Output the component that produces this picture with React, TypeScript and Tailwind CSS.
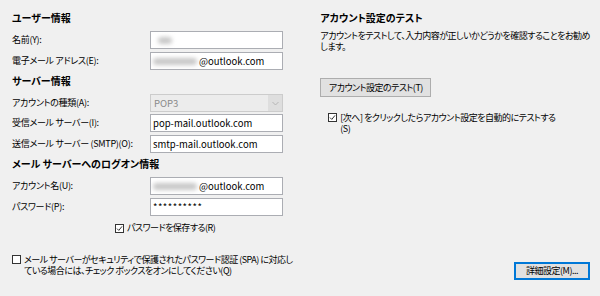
const font = "font-['Noto_Sans_CJK_JP',sans-serif] [font-feature-settings:'palt']";

function Field({ label, children }: { label: string; children?: React.ReactNode }) {
  return (
    <div className="flex items-center h-[18px]">
      <div className="w-[138px] shrink-0 whitespace-nowrap tracking-[-0.3px]">{label}</div>
      <div className="w-[133px] h-[18px] bg-white border border-[#abadb3] flex items-center px-[2px] whitespace-nowrap overflow-hidden text-[9.5px] tracking-normal">
        {children}
      </div>
    </div>
  );
}

function Blur({ w }: { w: number }) {
  return <span className="inline-block h-[7px] rounded-full bg-[#c8c8c8] blur-[2px]" style={{ width: w }} />;
}

function Check({ checked }: { checked?: boolean }) {
  return (
    <span className="inline-flex items-center justify-center w-[9px] h-[9px] border border-[#333] bg-white shrink-0">
      {checked && (
        <svg width="7" height="7" viewBox="0 0 7 7" fill="none">
          <path d="M1 3.6 L2.8 5.4 L6 1.4" stroke="#333" strokeWidth="1" />
        </svg>
      )}
    </span>
  );
}

export default function App() {
  return (
    <div className={`w-[600px] h-[296px] bg-[#f0f0f0] flex text-[9px] leading-[10px] tracking-[-0.5px] text-black whitespace-nowrap ${font}`}>
      <div className="w-[300px] pl-[12px] pt-[13px] flex flex-col">
        <div className="font-bold h-[12px] text-[10px] tracking-normal">ユーザー情報</div>
        <div className="mt-[6px]">
          <Field label="名前(Y):">
            <span className="ml-[5px]"><Blur w={14} /></span>
          </Field>
        </div>
        <div className="mt-[3px]">
          <Field label="電子メール アドレス(E):">
            <Blur w={44} />
            <span className="ml-[2px]">@outlook.com</span>
          </Field>
        </div>
        <div className="font-bold h-[12px] mt-[6px] text-[10px] tracking-normal">サーバー情報</div>
        <div className="mt-[6px] flex items-center h-[18px]">
          <div className="w-[138px] shrink-0 tracking-[-0.3px]">アカウントの種類(A):</div>
          <div className="w-[133px] h-[18px] bg-[#ececec] border border-[#cccccc] flex items-center text-[#8a8a8a] text-[9.5px] tracking-normal">
            <span className="flex-1 pl-[3px]">POP3</span>
            <span className="w-[14px] h-full bg-[#dedede] flex items-center justify-center">
              <svg width="7" height="5" viewBox="0 0 7 5" fill="none">
                <path d="M0.5 1 L3.5 4 L6.5 1" stroke="#b5b5b5" strokeWidth="1" />
              </svg>
            </span>
          </div>
        </div>
        <div className="mt-[2px]">
          <Field label="受信メール サーバー(I):">pop-mail.outlook.com</Field>
        </div>
        <div className="mt-[3px]">
          <Field label="送信メール サーバー (SMTP)(O):">smtp-mail.outlook.com</Field>
        </div>
        <div className="font-bold h-[12px] mt-[6px] text-[10px] tracking-normal">メール サーバーへのログオン情報</div>
        <div className="mt-[6px]">
          <Field label="アカウント名(U):">
            <Blur w={44} />
            <span className="ml-[2px]">@outlook.com</span>
          </Field>
        </div>
        <div className="mt-[3px]">
          <Field label="パスワード(P):">
            <span className="tracking-[0.5px]">**********</span>
          </Field>
        </div>
        <div className="mt-[6px] flex items-center gap-[3px] pl-[103px] h-[12px]">
          <Check checked />
          <span>パスワードを保存する(R)</span>
        </div>
        <div className="mt-[20px] flex gap-[3px]">
          <span className="mt-[1px]"><Check /></span>
          <div className="flex flex-col leading-[11px]">
            <span>メール サーバーがセキュリティで保護されたパスワード認証 (SPA) に対応し</span>
            <span>ている場合には、チェック ボックスをオンにしてください(Q)</span>
          </div>
        </div>
      </div>
      <div className="flex-1 pl-[27px] pt-[13px] pr-[10px] pb-[16px] flex flex-col">
        <div className="font-bold h-[12px] text-[10px] tracking-normal">アカウント設定のテスト</div>
        <div className="mt-[5px] flex flex-col leading-[11px]">
          <span>アカウントをテストして、入力内容が正しいかどうかを確認することをお勧め</span>
          <span>します。</span>
        </div>
        <div className="mt-[26px]">
          <button className="w-[111px] h-[19px] bg-[#e1e1e1] border border-[#adadad] flex items-center justify-center">
            アカウント設定のテスト(T)
          </button>
        </div>
        <div className="mt-[15px] ml-[8px] flex gap-[3px]">
          <span className="mt-[1px]"><Check checked /></span>
          <div className="flex flex-col leading-[11px]">
            <span>[次へ] をクリックしたらアカウント設定を自動的にテストする</span>
            <span>(S)</span>
          </div>
        </div>
        <div className="mt-auto flex justify-end">
          <button className="w-[76px] h-[18px] bg-[#e1e1e1] border border-[#0078d7] outline outline-1 outline-[#0078d7] -outline-offset-2 flex items-center justify-center">
            詳細設定(M)...
          </button>
        </div>
      </div>
    </div>
  );
}
